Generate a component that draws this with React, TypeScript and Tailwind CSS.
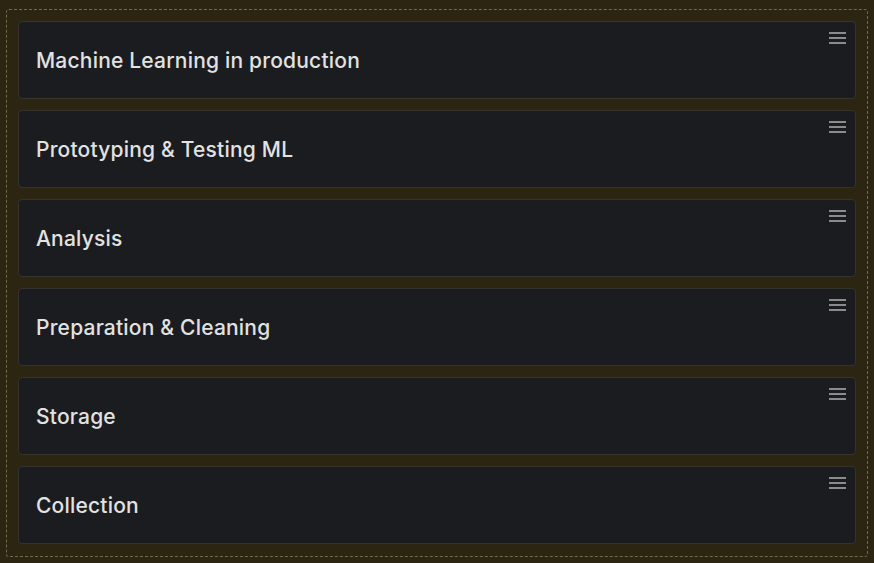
const stages = [
  'Machine Learning in production',
  'Prototyping & Testing ML',
  'Analysis',
  'Preparation & Cleaning',
  'Storage',
  'Collection',
]

function Handle() {
  return (
    <div className="absolute right-[9px] top-[10px] flex w-[17px] flex-col gap-[3px]">
      <span className="block h-[2px] bg-[#8b8b8b]" />
      <span className="block h-[2px] bg-[#8b8b8b]" />
      <span className="block h-[2px] bg-[#8b8b8b]" />
    </div>
  )
}

export default function App() {
  return (
    <div className="h-[563px] w-[874px] bg-[#2c2512] px-[6px] pb-[6px] pt-[9px] font-['Inter',sans-serif]">
      <div className="flex h-full flex-col gap-[11px] rounded-[3px] border border-dashed border-[#75694a] px-[11px] py-[11px]">
        {stages.map((s) => (
          <div
            key={s}
            className="relative flex h-[78px] items-center rounded-[4px] border border-[#35332b] bg-[#1b1c1f] pl-[17px] pt-[2px]"
          >
            <span className="text-[21px] font-medium tracking-[0.2px] text-[#e2e2e2]">{s}</span>
            <Handle />
          </div>
        ))}
      </div>
    </div>
  )
}
